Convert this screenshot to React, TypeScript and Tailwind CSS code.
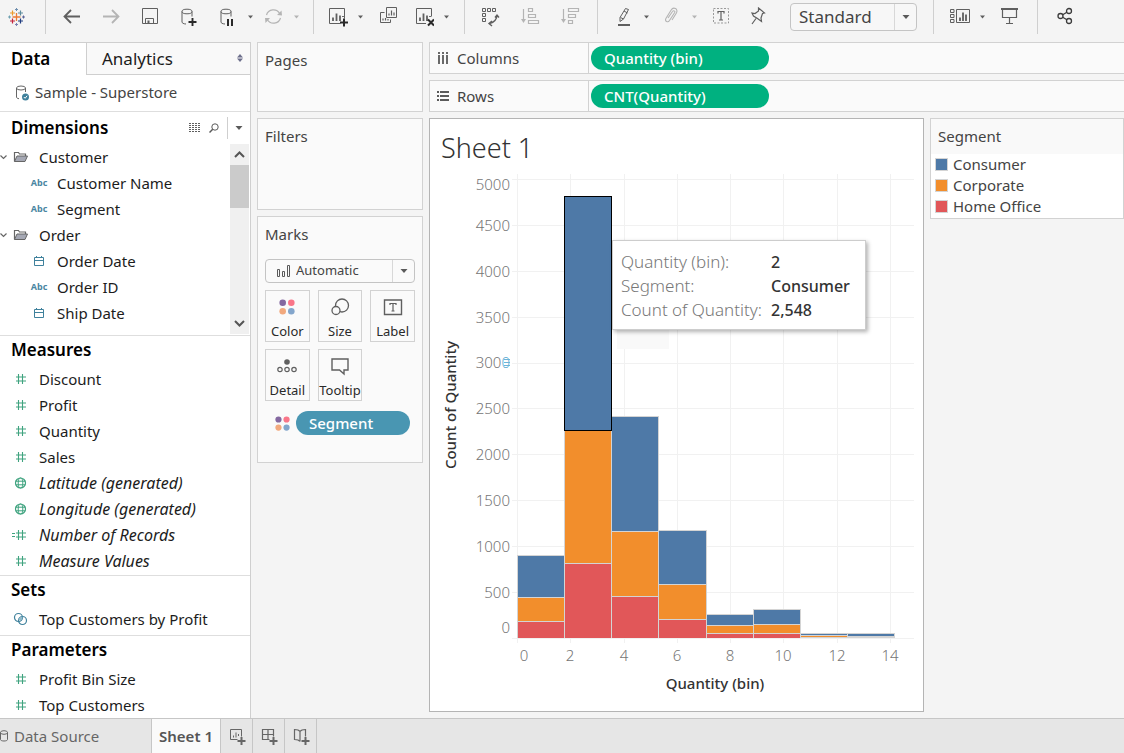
import { Fragment, useState } from 'react';
import type { ReactNode } from 'react';
import clsx from 'clsx';

type IconProps = { children: ReactNode; className?: string; size?: string; box?: string };

function Icon({ children, className, size = 'h-5 w-5', box = '0 0 20 20' }: IconProps) {
  return (
    <svg viewBox={box} className={clsx('shrink-0', size, className)} fill="none" stroke="currentColor" aria-hidden="true">
      {children}
    </svg>
  );
}

function Caret({ small }: { small?: boolean }) {
  return (
    <svg viewBox="0 0 10 6" className="h-[6px] w-[10px] shrink-0" fill="currentColor" aria-hidden="true">
      <path d={small ? 'M2 1.500h5L4.500 4.500z' : 'M1.500 1h7L5 5z'} />
    </svg>
  );
}

/* ---------- toolbar ---------- */

interface ToolProps {
  label: string;
  menu?: boolean;
  disabled?: boolean;
  children: ReactNode;
}

function Tool({ label, menu, disabled, children }: ToolProps) {
  const color = disabled ? 'text-[#b4b4b4]' : 'text-[#5f5f5f]';
  const button = (
    <button type="button" aria-label={label} disabled={disabled} className={color}>
      <Icon>{children}</Icon>
    </button>
  );
  if (!menu) return button;
  return (
    <div className="flex items-center gap-2">
      {button}
      <button type="button" aria-label={`${label} options`} disabled={disabled} className={color}>
        <Caret small />
      </button>
    </div>
  );
}

const cylinder = (
  <>
    <ellipse cx="8" cy="4.500" rx="5" ry="2.300" />
    <path d="M3 4.500v10.500c0 1 1.500 1.900 4 2M13 4.500v5" />
  </>
);

const sheetBars = <path d="M5 14v-3.500M8.500 14V6.500M12 14V8.500M15 10V9" strokeWidth="1.800" />;

const logoMarks = [
  { d: 'M10.500 6v8M6.500 10h8', color: '#eb7a34', w: 1.3 },
  { d: 'M6.500 3.500v5M4 6h5', color: '#eb9a2c', w: 1.2 },
  { d: 'M14.500 3.500v5M12 6h5', color: '#5c8a9c', w: 1.2 },
  { d: 'M6.500 11.500v5M4 14h5', color: '#c4243c', w: 1.2 },
  { d: 'M14.500 11.500v5M12 14h5', color: '#1f3c80', w: 1.2 },
  { d: 'M10.500 1v3M9 2.500h3', color: '#6f8fae', w: 1 },
  { d: 'M10.500 16v3M9 17.500h3', color: '#7a7fb0', w: 1 },
  { d: 'M3.500 8.500v3M2 10h3', color: '#6fa0b0', w: 1 },
  { d: 'M17.500 8.500v3M16 10h3', color: '#5a6498', w: 1 },
];

const groupClass = 'flex h-[34px] shrink-0 items-center border-r border-[#cfcfcf]';

function Toolbar() {
  return (
    <header className="flex h-[42px] items-start">
      <div className={clsx(groupClass, 'w-[46px] pl-[6px]')}>
        <button type="button" aria-label="Start page">
          <Icon>
            {logoMarks.map((m) => (
              <path key={m.d} d={m.d} stroke={m.color} strokeWidth={m.w} />
            ))}
          </Icon>
        </button>
      </div>
      <div className={clsx(groupClass, 'w-[268px] gap-[19px] pl-4')}>
        <Tool label="Undo">
          <path d="M18 9.500H3M9 3L2.500 9.500L9 16" strokeWidth="1.800" />
        </Tool>
        <Tool label="Redo" disabled>
          <path d="M2 9.500h15M11 3l6.500 6.500L11 16" strokeWidth="1.800" />
        </Tool>
        <Tool label="Save">
          <path d="M2.500 1.500h15v15h-15zM5.500 16v-4.500h8V16" />
          <path d="M8.500 16v-2.500" strokeWidth="2" />
        </Tool>
        <Tool label="New data source">
          {cylinder}
          <path d="M13.500 11v8M9.500 15h8" stroke="#2a2a2a" strokeWidth="1.900" />
        </Tool>
        <div className="flex gap-2">
          <Tool label="Pause auto updates" menu>
            {cylinder}
            <path d="M10 12v7M14 12v7" stroke="#2a2a2a" strokeWidth="2" />
          </Tool>
          <Tool label="Run update" menu disabled>
            <path d="M2.500 8a7.200 7.200 0 0 1 13.200-1.500M16.500 11a7.200 7.200 0 0 1-13.200 1.500" strokeWidth="1.200" />
            <path d="M13 8l5 .5l-.5-5zM6 11H1l.5 5z" fill="currentColor" stroke="none" />
          </Tool>
        </div>
      </div>
      <div className={clsx(groupClass, 'w-[151px] gap-[14px] pl-[14px]')}>
        <Tool label="New worksheet" menu>
          <path d="M12.500 16.500H1.500v-15h15v10" />
          {sheetBars}
          <path d="M16 11.500v8M12 15.500h8" stroke="#2a2a2a" strokeWidth="2" />
        </Tool>
        <Tool label="Duplicate">
          <path d="M6.500 .5h10v10h-10zM4.500 5.500h-4v10h10v-3" />
          <path d="M9 8.500V6.500M11.500 8.500v-5M14 8.500v-3M3 13.500v-2M5.500 13.500v-2.500M8 13.500v-1.500" strokeWidth="1.200" />
        </Tool>
        <Tool label="Clear sheet" menu>
          <path d="M12 16.500H2.500v-15h15v8" />
          <g transform="translate(1 0)">{sheetBars}</g>
          <path d="M14 12.500l6 6M20 12.500l-6 6" stroke="#2a2a2a" strokeWidth="2" />
        </Tool>
      </div>
      <div className={clsx(groupClass, 'w-[133px] gap-5 pl-[15px]')}>
        <Tool label="Swap rows and columns">
          <path d="M2.500 1.500h3v3h-3zM7.500 1.500h3v3h-3zM12.500 1.500h3v3h-3zM2.500 6.500h3v3h-3zM2.500 11.500h3v3h-3z" />
          <path d="M17 8c0 4-3 8-7.500 8.500M15 10.500l2-2.500l2 2.500M12 14l-3 2.500l3 2.500" strokeWidth="1.400" />
        </Tool>
        <Tool label="Sort ascending" disabled>
          <path d="M3.500 2v11M8.500 1.500h4v3h-4zM8.500 7.500h7v3h-7zM8.500 13.500h10v3h-10z" strokeWidth="1.200" />
          <path d="M1 12h5l-2.500 4z" fill="currentColor" stroke="none" />
        </Tool>
        <Tool label="Sort descending" disabled>
          <path d="M3.500 2v11M8.500 1.500h10v3h-10zM8.500 7.500h7v3h-7zM8.500 13.500h4v3h-4z" strokeWidth="1.200" />
          <path d="M1 12h5l-2.500 4z" fill="currentColor" stroke="none" />
        </Tool>
      </div>
      <div className={clsx(groupClass, 'w-[336px] pl-4')}>
        <div className="flex gap-[10px]">
          <Tool label="Highlight" menu>
            <path d="M11.500 1.500l3 1l-5 9.500L6 14.500v-4zM10 4l3.500 2M6.500 10.500l3 1.500" />
            <path d="M4 18h12" strokeWidth="2" />
          </Tool>
          <Tool label="Group members" menu disabled>
            <path d="M6 11l4.500-6.500c1-1.600 3-.4 2.200 1L7.500 13.500c-1.500 2.500-5 .8-3.600-2L9 3.200c2.500-4 7.600-1.200 5.400 2.800L10 13" strokeWidth="1.100" />
          </Tool>
          <Tool label="Show mark labels">
            <path d="M3.500 1.500h15v14.500h-15z" strokeDasharray="2 1.500" stroke="#999" />
            <path d="M8 6.500v-2h6v2M11 4.500v8.500M9 13h4" strokeWidth="1.200" />
          </Tool>
        </div>
        <div className="ml-4 flex">
          <Tool label="Fix axes">
            <path d="M12.500 1l6 5l-2 .5l-1.500 4.500l.5 3.500l-4-3L7.500 9L6 6l3 .5l3.500-2.500zM10 11.500l-4 5.500" strokeWidth="1.200" />
          </Tool>
        </div>
        <div className="relative ml-6">
          <select aria-label="Fit" className="h-7 w-[127px] appearance-none rounded-sm border border-[#c4c4c4] bg-[#f7f7f7] pl-2 text-[17px] text-[#444]">
            <option>Standard</option>
            <option>Fit Width</option>
            <option>Entire View</option>
          </select>
          <span className="pointer-events-none absolute inset-y-px right-px flex w-[22px] items-center justify-center border-l border-[#d8d8d8] text-[#5a5a5a]">
            <Caret />
          </span>
        </div>
      </div>
      <div className={clsx(groupClass, 'w-[104px] gap-3 pl-4')}>
        <Tool label="Show cards" menu>
          <path d="M.5 2.500h3.500v3H.5zM.5 7.500h3.500v3H.5zM.5 12.500h3.500v3H.5zM6.500 2.500h13v13h-13z" />
          <path d="M10 14v-3.500M13 14V5.500M16 14V7.500" strokeWidth="1.800" />
        </Tool>
        <Tool label="Presentation mode">
          <path d="M1 2h17" strokeWidth="2" />
          <path d="M2.500 2.500v8h14v-8M9.500 10.500v6M6 16.500h7" strokeWidth="1.200" />
        </Tool>
      </div>
      <div className="flex h-[34px] items-center pl-4">
        <Tool label="Share">
          <g stroke="#3c3c3c" strokeWidth="1.300">
            <circle cx="6.500" cy="9" r="2.500" />
            <circle cx="15" cy="4" r="2.500" />
            <circle cx="15" cy="14" r="2.500" />
            <path d="M8.700 7.800l4.200-2.600M8.700 10.200l4.200 2.600" />
          </g>
        </Tool>
      </div>
    </header>
  );
}

/* ---------- data pane ---------- */

type FieldKind = 'text' | 'date' | 'number' | 'geo' | 'calc' | 'set';

const hash = <path d="M6.500 4v10M10.500 4v10M4 7h10M4 11h10" strokeWidth="1.100" />;

function FieldIcon({ kind }: { kind: FieldKind }) {
  if (kind === 'text') {
    return <span className="w-[18px] text-center text-[9px] font-bold text-[#4a86a2]">Abc</span>;
  }
  const green = kind === 'number' || kind === 'geo' || kind === 'calc';
  return (
    <Icon box="0 0 18 18" size="h-[18px] w-[18px]" className={green ? 'text-[#3fa37f]' : 'text-[#3f819c]'}>
      {kind === 'date' && <path d="M4.500 5.500h9v8h-9zM4.500 8.500h9M6.500 4v2M11.500 4v2" />}
      {kind === 'number' && hash}
      {kind === 'calc' && (
        <>
          {hash}
          <path d="M0 7.500h3M0 10.500h3" />
        </>
      )}
      {kind === 'geo' && (
        <>
          <circle cx="8.500" cy="9" r="5" strokeWidth="1.200" />
          <ellipse cx="8.500" cy="9" rx="2.300" ry="5" />
          <path d="M3.500 7.200h10M3.500 10.800h10" />
        </>
      )}
      {kind === 'set' && (
        <>
          <circle cx="6.500" cy="7.500" r="4" strokeWidth="1.200" />
          <circle cx="10.500" cy="10.500" r="4" strokeWidth="1.200" />
          <path d="M6.500 10c0-2 1.500-3.500 4-3.200c.3 2.200-1.500 4.200-4 3.200z" fill="#8fbacb" stroke="none" />
        </>
      )}
    </Icon>
  );
}

interface Field {
  name: string;
  kind: FieldKind;
  generated?: boolean;
}

function FieldRow({ field, nested }: { field: Field; nested?: boolean }) {
  return (
    <li className={clsx('flex h-[26px] items-center gap-[9px]', nested ? 'pl-[30px]' : 'pl-3')}>
      <FieldIcon kind={field.kind} />
      <span className={clsx('whitespace-nowrap', field.generated && 'text-base italic')}>{field.name}</span>
    </li>
  );
}

const folders: { name: string; fields: Field[] }[] = [
  {
    name: 'Customer',
    fields: [
      { name: 'Customer Name', kind: 'text' },
      { name: 'Segment', kind: 'text' },
    ],
  },
  {
    name: 'Order',
    fields: [
      { name: 'Order Date', kind: 'date' },
      { name: 'Order ID', kind: 'text' },
      { name: 'Ship Date', kind: 'date' },
    ],
  },
];

const measures: Field[] = [
  { name: 'Discount', kind: 'number' },
  { name: 'Profit', kind: 'number' },
  { name: 'Quantity', kind: 'number' },
  { name: 'Sales', kind: 'number' },
  { name: 'Latitude (generated)', kind: 'geo', generated: true },
  { name: 'Longitude (generated)', kind: 'geo', generated: true },
  { name: 'Number of Records', kind: 'calc', generated: true },
  { name: 'Measure Values', kind: 'number', generated: true },
];

const sets: Field[] = [{ name: 'Top Customers by Profit', kind: 'set' }];

const parameters: Field[] = [
  { name: 'Profit Bin Size', kind: 'number' },
  { name: 'Top Customers', kind: 'number' },
];

const headingClass = 'pl-[11px] text-[17px] font-semibold text-black';

function FieldSection({ title, fields, className }: { title: string; fields: Field[]; className?: string }) {
  return (
    <section className={clsx('border-t border-[#dedede]', className)}>
      <h2 className={clsx(headingClass, 'h-[30px] leading-7')}>{title}</h2>
      <ul>
        {fields.map((f) => (
          <FieldRow key={f.name} field={f} />
        ))}
      </ul>
    </section>
  );
}

function DataPane() {
  return (
    <aside className="flex w-[251px] shrink-0 flex-col border-r border-[#cfcfcf] bg-white text-[15px] text-[#1c1c1c]">
      <div className="flex h-[33px] border-t border-[#cfcfcf]">
        <button type="button" className="w-[86px] pl-[11px] text-left text-[17px] font-semibold text-black">
          Data
        </button>
        <button
          type="button"
          className="flex flex-1 items-center justify-between border-b border-l border-[#cfcfcf] bg-[#f9f9f9] pr-1 pl-[15px] text-[17px]"
        >
          Analytics
          <svg viewBox="0 0 10 12" className="mr-px h-3 w-[10px] fill-[#6d6f8c]" aria-hidden="true">
            <path d="M5 1l3 3.500H2zM5 9l3-3.500H2z" />
          </svg>
        </button>
      </div>
      <button type="button" className="flex h-9 items-center gap-[5px] pb-px pl-3 text-[#444]">
        <Icon box="0 0 18 18" size="h-[18px] w-[18px]" className="text-[#666]">
          <ellipse cx="9" cy="4" rx="4.500" ry="2" />
          <path d="M4.500 4v9c0 1 1 1.500 2.500 1.700M13.500 4v4" />
          <circle cx="13.500" cy="13" r="3.500" fill="#3f819c" stroke="none" />
          <path d="M11.800 13l1.300 1.300l2-2.500" stroke="#fff" />
        </Icon>
        Sample - Superstore
      </button>

      <section className="h-[224px] border-t border-[#dedede]">
        <div className="flex h-8 items-center">
          <h2 className={clsx(headingClass, 'flex-1')}>Dimensions</h2>
          <button type="button" aria-label="View data" className="text-[#5f5f5f]">
            <Icon box="0 0 12 10" size="h-[10px] w-3">
              <path d="M0 .5h12M0 2.500h12M0 4.500h12M0 6.500h12M0 8.500h12" strokeDasharray="2 1" />
            </Icon>
          </button>
          <button type="button" aria-label="Find field" className="ml-2 text-[#5a5a5a]">
            <Icon box="0 0 10 10" size="h-[10px] w-[10px]">
              <circle cx="6" cy="4" r="3.200" />
              <path d="M3.700 6.300L.5 9.500" strokeWidth="1.500" />
            </Icon>
          </button>
          <button type="button" aria-label="Dimensions menu" className="ml-2 flex h-[22px] w-[23px] items-center justify-center border-l border-[#cfcfcf] text-[#5a5a5a]">
            <Caret />
          </button>
        </div>
        <div className="flex h-[190px]">
          <ul className="flex-1">
            {folders.map((folder) => (
              <Fragment key={folder.name}>
                <li className="flex h-[26px] items-center">
                  <Icon box="0 0 12 12" size="h-3 w-3" className="text-[#666]">
                    <path d="M.5 4.500L3.500 7.500L6.500 4.500" strokeWidth="1.200" />
                  </Icon>
                  <Icon box="0 0 18 18" size="h-[18px] w-[18px]" className="mr-[9px] text-[#666]">
                    <path d="M2.500 13.500v-9h4l1 1.500h6v2" strokeWidth="1.200" />
                    <path d="M5 8h10.500l-2.500 5.500H2.500z" fill="#a5a8b4" />
                  </Icon>
                  {folder.name}
                </li>
                {folder.fields.map((f) => (
                  <FieldRow key={f.name} field={f} nested />
                ))}
              </Fragment>
            ))}
          </ul>
          <div className="mr-px flex w-[19px] flex-col justify-between bg-[#f0f0f0] text-[#555]">
            <div>
              <Icon box="0 0 19 21" size="h-[21px] w-[19px]">
                <path d="M5 13L9.500 8.500L14 13" strokeWidth="2" />
              </Icon>
              <div className="h-[43px] bg-[#cbcbcb]" />
            </div>
            <Icon box="0 0 19 21" size="h-[21px] w-[19px]">
              <path d="M5 8L9.500 12.500L14 8" strokeWidth="2" />
            </Icon>
          </div>
        </div>
      </section>

      <FieldSection title="Measures" fields={measures} className="pb-px" />
      <FieldSection title="Sets" fields={sets} className="pb-[3px]" />
      <FieldSection title="Parameters" fields={parameters} />
    </aside>
  );
}

/* ---------- cards ---------- */

function ColorDots({ className }: { className: string }) {
  return (
    <svg viewBox="0 0 16 16" className={clsx('shrink-0', className)} aria-hidden="true">
      <circle cx="3.700" cy="3.700" r="3.300" fill="#8468a0" />
      <circle cx="12.300" cy="3.700" r="3.300" fill="#fa7689" />
      <circle cx="3.700" cy="12.300" r="3.300" fill="#f2a97e" />
      <circle cx="12.300" cy="12.300" r="3.300" fill="#84a6cc" />
    </svg>
  );
}

const markButtons: { label: string; icon: ReactNode }[] = [
  { label: 'Color', icon: <ColorDots className="my-[2px] h-4 w-4" /> },
  {
    label: 'Size',
    icon: (
      <Icon>
        <circle cx="12" cy="8.500" r="6.500" strokeWidth="1.300" />
        <circle cx="6" cy="13.500" r="4" fill="#fafafa" strokeWidth="1.300" />
      </Icon>
    ),
  },
  {
    label: 'Label',
    icon: (
      <Icon>
        <path d="M1.500 3h17v14.500h-17z" strokeWidth="1.400" />
        <path d="M7 8V6.500h6V8M10 6.500v7.500M8.500 14h3" strokeWidth="1.200" />
      </Icon>
    ),
  },
  {
    label: 'Detail',
    icon: (
      <Icon>
        <circle cx="10" cy="6" r="2.800" fill="currentColor" stroke="none" />
        <circle cx="3" cy="13.500" r="2.200" strokeWidth="1.200" />
        <circle cx="10" cy="13.500" r="2.200" strokeWidth="1.200" />
        <circle cx="17" cy="13.500" r="2.200" strokeWidth="1.200" />
      </Icon>
    ),
  },
  {
    label: 'Tooltip',
    icon: (
      <Icon>
        <path d="M2 3h16v11h-4v4l-4.500-4H2z" strokeWidth="1.400" />
      </Icon>
    ),
  },
];

const cardClass = 'border border-[#d2d2d2] bg-[#fafafa] px-[7px]';
const cardTitle = 'h-[34px] text-[15px] leading-[34px] text-[#444]';

function Cards() {
  return (
    <div className="flex w-[166px] shrink-0 flex-col gap-[6px]">
      <section className={clsx(cardClass, 'min-h-[70px]')}>
        <h2 className={cardTitle}>Pages</h2>
      </section>
      <section className={clsx(cardClass, 'min-h-[92px]')}>
        <h2 className={cardTitle}>Filters</h2>
      </section>
      <section className={clsx(cardClass, 'pb-[27px]')}>
        <h2 className={cardTitle}>Marks</h2>
        <div className="relative mt-2">
          <select aria-label="Mark type" className="block h-6 w-full appearance-none rounded-sm border border-[#c4c4c4] bg-[#fafafa] pl-[30px] text-[13px] text-[#444]">
            <option>Automatic</option>
            <option>Bar</option>
            <option>Line</option>
          </select>
          <span className="pointer-events-none absolute inset-y-0 left-3 flex items-center text-[#5a5a5a]">
            <Icon box="0 0 14 14" size="h-[14px] w-[14px]">
              <path d="M.5 5.500h2v7h-2zM5.500 7.500h2v5h-2zM10.500 1.500h2v11h-2z" />
            </Icon>
          </span>
          <span className="pointer-events-none absolute inset-y-px right-px flex w-[22px] items-center justify-center border-l border-[#d8d8d8] text-[#5a5a5a]">
            <Caret />
          </span>
        </div>
        <div className="mt-[7px] grid grid-cols-3 gap-x-2 gap-y-[7px]">
          {markButtons.map((m) => (
            <button key={m.label} type="button" className="flex h-[52px] flex-col items-center justify-between border border-[#d2d2d2] pt-[6px] text-[13px] text-[#5f5f5f]">
              {m.icon}
              <span className="leading-5 text-[#2a2a2a]">{m.label}</span>
            </button>
          ))}
        </div>
        <div className="mt-[10px] flex items-center pr-[5px] pl-[10px]">
          <ColorDots className="h-[15px] w-[15px]" />
          <button type="button" className="ml-[6px] h-6 flex-1 rounded-full bg-[#4996b2] pl-[13px] text-left text-[15px] font-medium text-white">
            Segment
          </button>
        </div>
      </section>
    </div>
  );
}

/* ---------- shelves ---------- */

function Shelf({ label, pill, icon }: { label: string; pill: string; icon: ReactNode }) {
  return (
    <div className="flex h-8 border border-r-0 border-[#d2d2d2] bg-[#fafafa] text-[15px] text-[#444]">
      <div className="flex w-[159px] items-center gap-2 border-r border-[#d2d2d2] pl-[7px]">
        <Icon box="0 0 12 12" size="h-3 w-3" className="text-[#5a5a5a]">
          {icon}
        </Icon>
        {label}
      </div>
      <div className="flex flex-1 items-center pl-[2px]">
        <button type="button" className="h-6 w-[178px] rounded-full bg-[#00b180] pl-[13px] text-left font-medium text-white">
          {pill}
        </button>
      </div>
    </div>
  );
}

/* ---------- chart ---------- */

const segments = [
  { name: 'Home Office', fill: '#e15759' },
  { name: 'Corporate', fill: '#f28e2c' },
  { name: 'Consumer', fill: '#4e79a7' },
];

// record counts per bin, in the order of `segments`
const bins = [
  [185, 261, 458],
  [817, 1450, 2548],
  [458, 708, 1253],
  [207, 381, 588],
  [55, 87, 120],
  [55, 98, 163],
  [6, 26, 24],
  [8, 12, 36],
];

const BASE = 472;
const LEFT = 87;
const y = (count: number) => BASE - Math.round(count * 0.0918);
const binX = (i: number) => LEFT + Math.round(i * 47.15);
const valueX = (v: number) => LEFT + Math.round(v * 26.64);

function Histogram() {
  return (
    <svg viewBox="0 0 493 540" className="w-full" role="img" aria-label="Count of Quantity by Quantity (bin)" shapeRendering="crispEdges">
      <g fill="#f1f1f1">
        {[0, 2, 4, 6, 8, 10, 12, 14].map((v) => (
          <rect key={v} x={valueX(v)} y="8" width="1" height="469" />
        ))}
        {[0, 500, 1000, 1500, 2000, 2500, 3000, 3500, 4000, 4500, 5000].map((v) => (
          <rect key={v} x="82" y={y(v)} width="402" height="1" />
        ))}
      </g>
      <rect x="187" y="164" width="52" height="19" fill="#f9f9f9" />

      {bins.map((counts, i) => {
        const x = binX(i);
        const w = binX(i + 1) - x;
        let total = 0;
        return (
          <g key={i}>
            {counts.map((count, s) => {
              const bottom = y(total);
              total += count;
              const top = y(total);
              return (
                <g key={segments[s].name}>
                  <rect x={x} y={top} width={w + 1} height={bottom - top} fill="#d4d4d4" />
                  <rect x={x + 1} y={top + 1} width={w - 1} height={Math.max(bottom - top - 1, 0)} fill={segments[s].fill} />
                </g>
              );
            })}
          </g>
        );
      })}
      {/* hovered mark */}
      <rect x={binX(1) + 0.5} y={y(4815) + 0.5} width="47" height="234" fill="none" stroke="#000" />

      <g fontSize="15" fill="#757575" className="font-light" textAnchor="end">
        {[500, 1000, 1500, 2000, 2500, 3500, 4000, 4500].map((v) => (
          <text key={v} x="80" y={y(v) + 6}>
            {v}
          </text>
        ))}
        <text x="80" y="24">5000</text>
        <text x="80" y="467">0</text>
        <text x="80" y={y(3000) + 5}>
          300<tspan fill="#5aa9d0">0</tspan>
        </text>
      </g>
      <path d="M74 193.500h6M74 196.500h6M74 199.500h6" stroke="#6cb4d8" />
      <g fontSize="15" fill="#757575" className="font-light" textAnchor="middle">
        <text x="94" y="495">0</text>
        {[2, 4, 6, 8, 10, 12, 14].map((v) => (
          <text key={v} x={valueX(v)} y="495">
            {v}
          </text>
        ))}
      </g>
      <g fontSize="15" fill="#333" className="font-medium" textAnchor="middle">
        <text x="285" y="523">Quantity (bin)</text>
        <text transform="translate(26 239) rotate(-90)">Count of Quantity</text>
      </g>
    </svg>
  );
}

const tooltipRows = [
  ['Quantity (bin):', '2'],
  ['Segment:', 'Consumer'],
  ['Count of Quantity:', '2,548'],
];

function Worksheet() {
  return (
    <section className="relative min-w-0 flex-1 border border-[#b4b4b4] bg-white">
      <h1 className="h-[47px] pt-[11px] pl-[11px] text-[27px] leading-9 font-light text-[#333]">Sheet 1</h1>
      <Histogram />
      <dl
        role="tooltip"
        className="absolute top-[121px] left-[182px] grid grid-cols-[150px_auto] border border-[#cdcdcd] bg-white pt-[9px] pr-[15px] pb-[7px] pl-2 text-base leading-6 whitespace-nowrap shadow-[2px_2px_4px_rgba(0,0,0,0.3)]"
      >
        {tooltipRows.map(([term, value]) => (
          <Fragment key={term}>
            <dt className="text-[17px] font-light text-[#777]">{term}</dt>
            <dd className="font-medium text-[#333]">{value}</dd>
          </Fragment>
        ))}
      </dl>
    </section>
  );
}

function Legend() {
  return (
    <section className="w-[194px] shrink-0 self-start border border-[#d2d2d2] bg-white text-[15px] text-[#444]">
      <h2 className="h-[35px] bg-[#f9f9f9] pl-[7px] leading-[35px]">Segment</h2>
      <ul className="pb-px">
        {[...segments].reverse().map((s) => (
          <li key={s.name} className="flex h-[21px] items-center gap-[5px] pl-1">
            <svg viewBox="0 0 13 13" className="h-[13px] w-[13px]" aria-hidden="true">
              <rect x=".5" y=".5" width="12" height="12" fill={s.fill} stroke="#d4d4d4" />
            </svg>
            {s.name}
          </li>
        ))}
      </ul>
    </section>
  );
}

/* ---------- sheet tabs ---------- */

const newTabs: { label: string; icon: ReactNode }[] = [
  {
    label: 'New worksheet',
    icon: <path d="M9.500 12.500h-7V2.500h11v7M5.500 10.500V8.500M8 10.500V5.500M10.500 9V7" />,
  },
  {
    label: 'New dashboard',
    icon: <path d="M9.500 12.500h-7v-10h11v7M8 2.500v10M2.500 7.500h11" strokeWidth="1.200" />,
  },
  {
    label: 'New story',
    icon: <path d="M8 14.500c-1-1.500-3-2-5.500-2V2.500C5 2.500 7 3 8 4.500c1-1.500 3-2 5.500-2v7M8 4.500v10" strokeWidth="1.200" />,
  },
];

function SheetTabs() {
  const [active, setActive] = useState('Sheet 1');
  return (
    <nav className="flex h-[35px] border-t border-[#c6c6c6] bg-[#e6e6e6] text-[15px] text-[#666]">
      <button type="button" className="flex w-[151px] items-center gap-[5px]" onClick={() => setActive('Data Source')}>
        <Icon box="0 0 9 14" size="h-[14px] w-[9px]">
          <ellipse cx="4" cy="3.500" rx="3.500" ry="1.800" />
          <path d="M.5 3.500v7c0 2 7 2 7 0v-7" />
        </Icon>
        Data Source
      </button>
      <button
        type="button"
        aria-pressed={active === 'Sheet 1'}
        className="w-[70px] border-x border-[#c6c6c6] bg-[#fafafa] font-semibold whitespace-nowrap text-[#555]"
        onClick={() => setActive('Sheet 1')}
      >
        Sheet 1
      </button>
      {newTabs.map((t) => (
        <button key={t.label} type="button" aria-label={t.label} className="flex w-8 items-center justify-center border-r border-[#c6c6c6]">
          <Icon box="0 0 18 18" size="h-[18px] w-[18px]">
            {t.icon}
            <path d="M13.500 10v8M9.500 14h8" strokeWidth="2" />
          </Icon>
        </button>
      ))}
    </nav>
  );
}

export default function App() {
  return (
    <div className="flex min-h-screen flex-col bg-[#f4f4f4] font-['Noto_Sans','Open_Sans',sans-serif]">
      <Toolbar />
      <div className="flex flex-1">
        <DataPane />
        <div className="flex min-w-0 flex-1 gap-[6px] pb-[6px] pl-[6px]">
          <Cards />
          <main className="flex min-w-0 flex-1 flex-col gap-[6px]">
            <Shelf
              label="Columns"
              pill="Quantity (bin)"
              icon={<path d="M2 0v2M2 3v9M6 0v2M6 3v9M10 0v2M10 3v9" strokeWidth="1.800" />}
            />
            <Shelf
              label="Rows"
              pill="CNT(Quantity)"
              icon={<path d="M0 2h2M3 2h9M0 6h2M3 6h9M0 10h2M3 10h9" strokeWidth="1.800" />}
            />
            <div className="flex flex-1 gap-[6px]">
              <Worksheet />
              <Legend />
            </div>
          </main>
        </div>
      </div>
      <SheetTabs />
    </div>
  );
}
